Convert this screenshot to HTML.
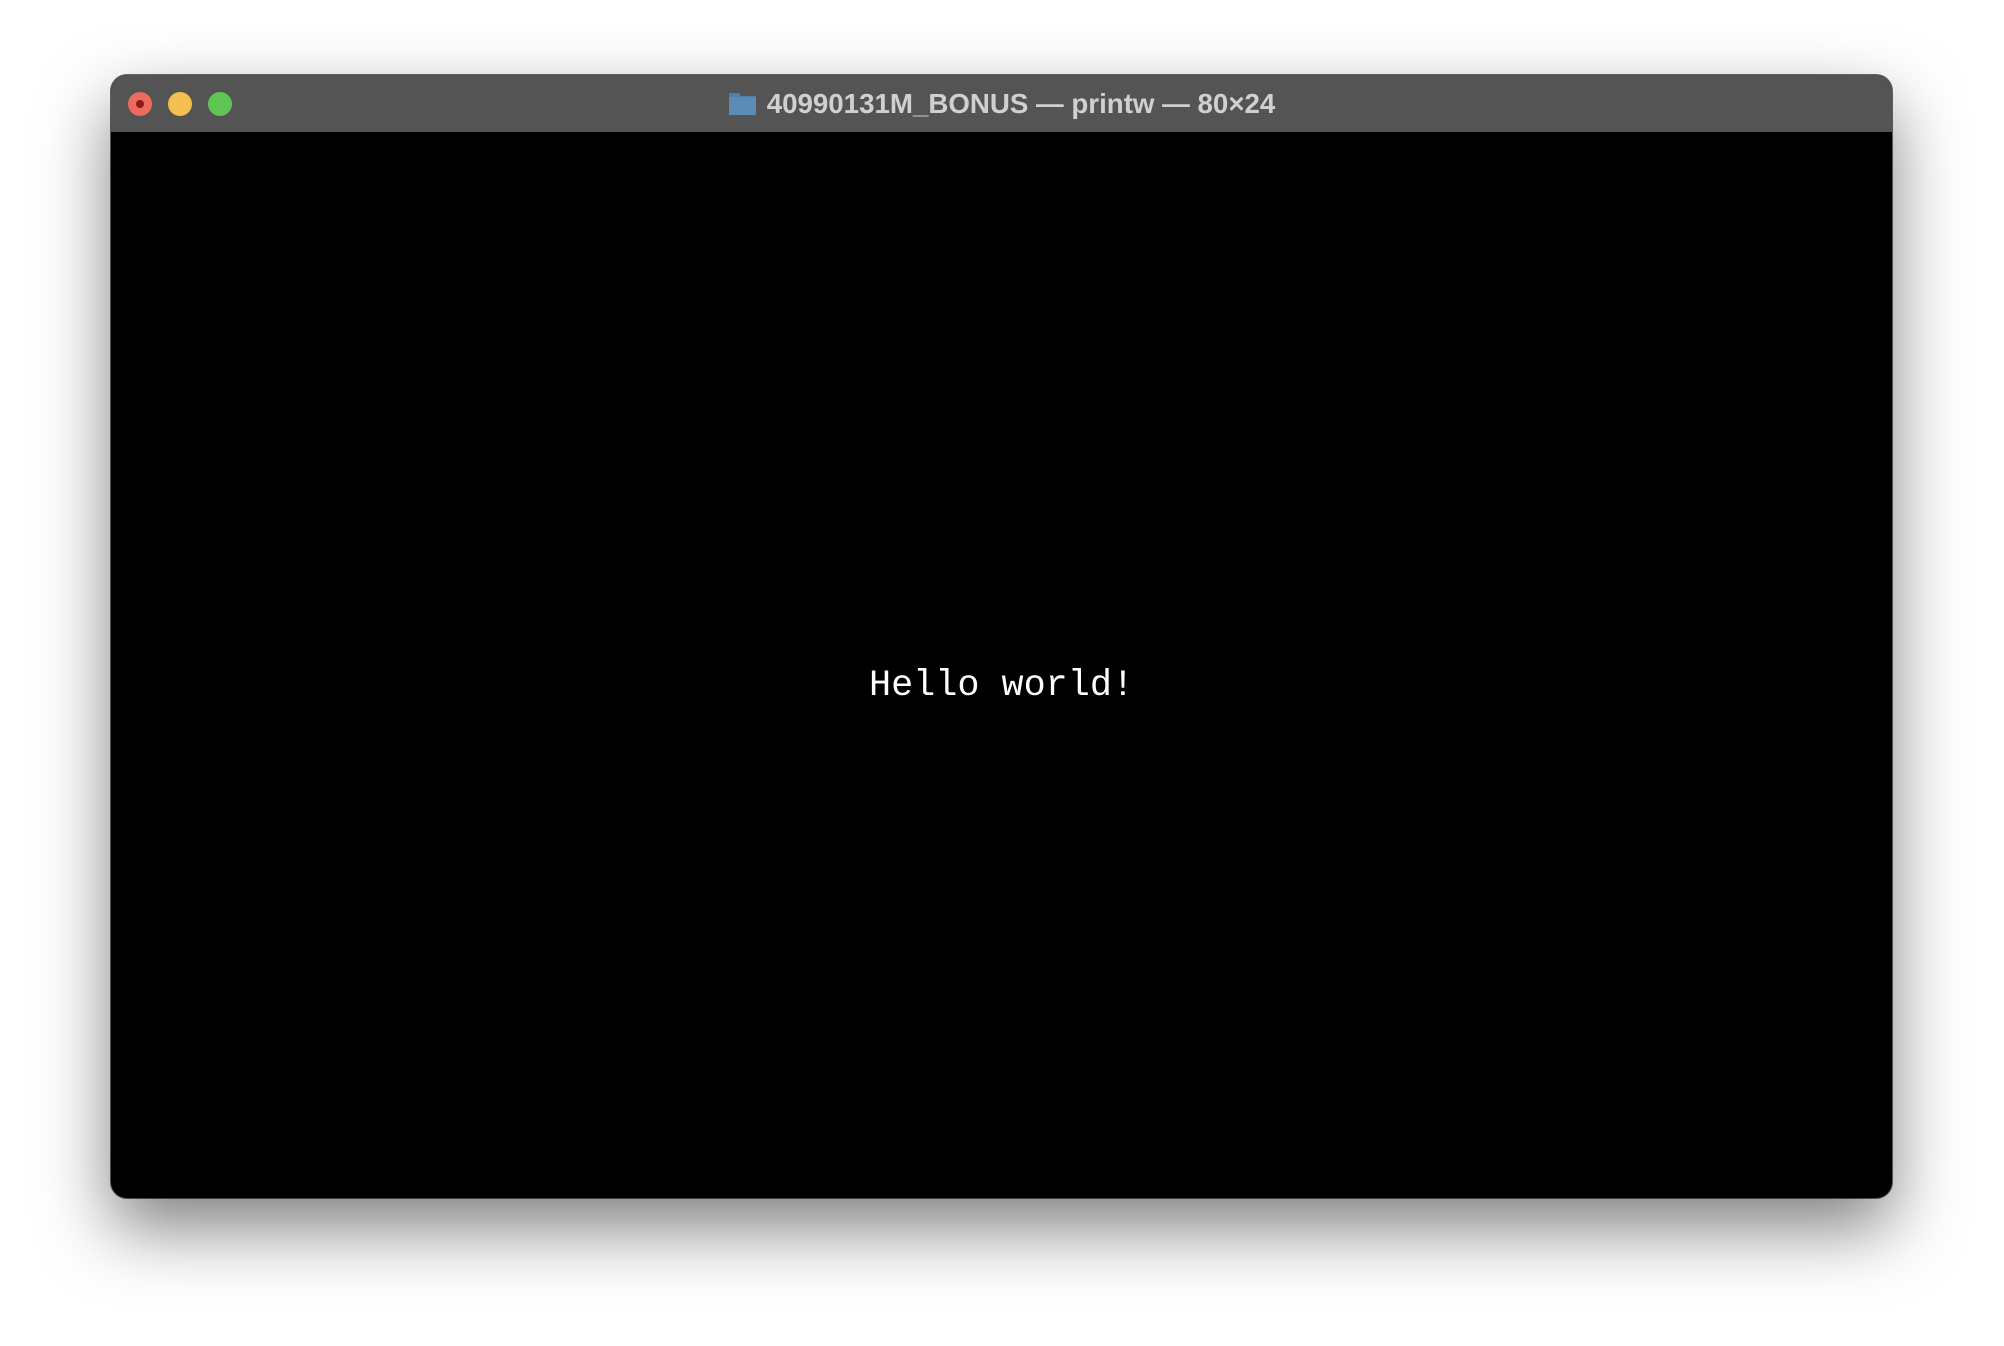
<!DOCTYPE html>
<html><head><style>
html,body{margin:0;padding:0;width:2004px;height:1346px;background:#fff;overflow:hidden}
.win{position:absolute;left:111px;top:75px;width:1781px;height:1123px;border-radius:16px;background:#000;overflow:hidden;box-shadow:0 30px 70px rgba(0,0,0,0.5),0 0 0 1px #6a6a6a;}
.bar{position:absolute;left:0;top:0;right:0;height:57px;background:#545454;}
.tl{position:absolute;top:17px;width:24px;height:24px;border-radius:50%}
.title{position:absolute;left:0;right:0;top:0;height:57px;display:flex;align-items:center;justify-content:center;font:bold 27.7px "Liberation Sans",sans-serif;color:#d0d0d0;}
.txt{position:absolute;left:758px;top:590px;font:36.8px "Liberation Mono",monospace;color:#fff;white-space:pre}
</style></head><body>
<div class="win">
<div class="bar">
<div class="tl" style="left:17px;background:#ec6a5e"><div style="position:absolute;left:8px;top:8px;width:8px;height:8px;border-radius:50%;background:#8e1a10"></div></div>
<div class="tl" style="left:57px;background:#f4bf4f"></div>
<div class="tl" style="left:97px;background:#61c554"></div>
<div class="title"><svg width="29" height="26" viewBox="0 0 29 26" style="margin-right:10px;margin-top:-2px"><path d="M1 3h10l2 3h15v19H1z" fill="#4f7fa8"/><rect x="1" y="7" width="27" height="18" fill="#5b8cb6"/></svg><span>40990131M_BONUS — printw — 80×24</span></div>
</div>
<div class="txt">Hello world!</div>
</div>
</body></html>
